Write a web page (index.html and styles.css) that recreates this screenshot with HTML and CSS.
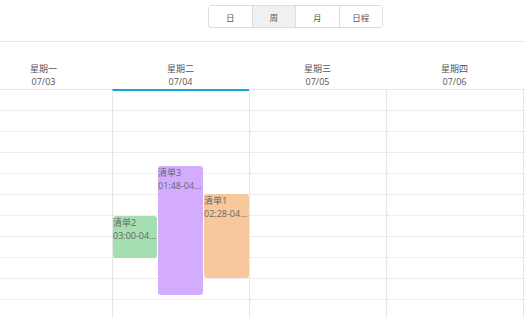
FILE: index.html
```html
<!DOCTYPE html>
<html lang="zh">
<head>
    <meta charset="UTF-8">
    <title>清单 - 周视图</title>
    <link rel="stylesheet" href="styles.css">
</head>
<body>
    <div class="toolbar">
        <div class="view-switch">
            <button class="view-btn">日</button>
            <button class="view-btn active">周</button>
            <button class="view-btn">月</button>
            <button class="view-btn">日程</button>
        </div>
    </div>

    <div class="calendar">
        <div class="week">
            <div class="day-head">
                <span>星期一</span>
                <span>07/03</span>
            </div>
            <div class="day-head current">
                <span>星期二</span>
                <span>07/04</span>
            </div>
            <div class="day-head">
                <span>星期三</span>
                <span>07/05</span>
            </div>
            <div class="day-head">
                <span>星期四</span>
                <span>07/06</span>
            </div>
            <div class="day-head"></div>
        </div>

        <div class="week body">
            <div class="day-col"></div>
            <div class="day-col">
                <!-- events: top = minutes * 0.7px (42px per hour) -->
                <div class="event green" style="top: 126px; height: 42px; left: 0;">
                    <div>清单2</div>
                    <div>03:00-04:00</div>
                </div>
                <div class="event purple" style="top: 76px; height: 129px; left: 45px;">
                    <div>清单3</div>
                    <div>01:48-04:53</div>
                </div>
                <div class="event orange" style="top: 104px; height: 84px; left: 91px;">
                    <div>清单1</div>
                    <div>02:28-04:28</div>
                </div>
            </div>
            <div class="day-col"></div>
            <div class="day-col"></div>
            <div class="day-col"></div>
        </div>
    </div>

    <script>
        // half-hour slots for each day column
        document.querySelectorAll('.day-col').forEach(function (col) {
            for (let i = 0; i < 11; i++) {
                const slot = document.createElement('div');
                slot.className = i % 2 === 0 ? 'slot hour' : 'slot half';
                col.insertBefore(slot, col.firstChild);
            }
        });
    </script>
</body>
</html>
```

FILE: styles.css
```css
body {
    margin: 0;
    font-family: "Open Sans", "Noto Sans CJK SC", sans-serif;
    font-size: 9px;
    color: #555;
    background: white;
    width: 525px;
    height: 318px;
    overflow: hidden;
}
.toolbar {
    height: 42px;
    box-sizing: border-box;
    padding: 5px 0 0 208px;
    border-bottom: 1px solid #e8e8e8;
}
.view-switch {
    display: flex;
    width: 175px;
    height: 23px;
    border: 1px solid #dcdcdc;
    border-radius: 3px;
    box-sizing: border-box;
    overflow: hidden;
}
.view-btn {
    flex: 1;
    border: none;
    border-left: 1px solid #dcdcdc;
    background: white;
    font-family: inherit;
    font-size: 8.5px;
    color: #555;
    padding: 0;
    cursor: pointer;
}
.view-btn:first-child {
    border-left: none;
}
.view-btn.active {
    background: #f0f0f0;
}
.calendar {
    margin-left: -25px;
}
.week {
    display: flex;
}
.day-head {
    position: relative;
    width: 137px;
    flex: none;
    height: 48px;
    box-sizing: border-box;
    border-bottom: 1px solid #e8e8e8;
    display: flex;
    flex-direction: column;
    align-items: center;
    justify-content: flex-end;
    padding-bottom: 1px;
    line-height: 12.5px;
}
.day-head.current::after {
    content: "";
    position: absolute;
    left: 0;
    right: 0;
    bottom: -2px;
    height: 2px;
    background: #1aa3d9;
}
.day-col {
    position: relative;
    width: 137px;
    flex: none;
    box-sizing: border-box;
    border-left: 1px solid #e6e6e6;
}
.day-col:first-child {
    border-left: none;
}
.slot {
    height: 21px;
    box-sizing: border-box;
}
.slot.half {
    border-bottom: 1px dotted #e2e2e2;
}
.slot.hour {
    border-bottom: 1px solid #ececec;
}
.event {
    position: absolute;
    width: 44px;
    box-sizing: border-box;
    border-radius: 3px;
    padding-top: 1px;
    line-height: 12.5px;
    color: #666;
    overflow: hidden;
}
.event div {
    white-space: nowrap;
    overflow: hidden;
    text-overflow: ellipsis;
}
.event.green {
    background: #a5dfb1;
}
.event.purple {
    background: #d3acfd;
    width: 45px;
}
.event.orange {
    background: #f6c89c;
    width: 45px;
}
```
